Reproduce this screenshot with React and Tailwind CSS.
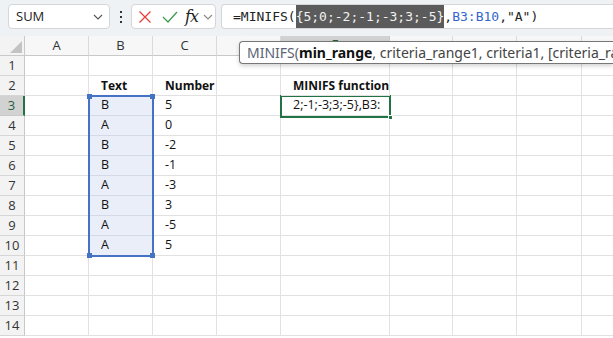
const cols = [
  { key: "A", w: "w-[64px]" },
  { key: "B", w: "w-[64px]" },
  { key: "C", w: "w-[64px]" },
  { key: "D", w: "w-[64px]" },
  { key: "E", w: "w-[109px]" },
  { key: "F", w: "w-[63px]" },
  { key: "G", w: "w-[64px]" },
  { key: "H", w: "w-[65px]" },
  { key: "I", w: "w-[64px]" },
];

const data = {
  2: { B: "Text", C: "Number", E: "MINIFS function" },
  3: { B: "B", C: "5", E: "2;-1;-3;3;-5},B3:" },
  4: { B: "A", C: "0" },
  5: { B: "B", C: "-2" },
  6: { B: "B", C: "-1" },
  7: { B: "A", C: "-3" },
  8: { B: "B", C: "3" },
  9: { B: "A", C: "-5" },
  10: { B: "A", C: "5" },
};

const rows = Array.from({ length: 14 }, (_, i) => i + 1);

function Chevron({ className }) {
  return (
    <svg viewBox="0 0 10 6" className={className} fill="none" stroke="currentColor" strokeWidth="1.1">
      <path d="M1 1l4 4 4-4" />
    </svg>
  );
}

function TopBar() {
  return (
    <div className="h-[36px] bg-[#eff2f5] flex items-start pt-[4px] pl-[8px]">
      <div className="w-[102px] h-[25px] bg-white border border-[#d4d6d9] rounded-[4px] flex items-center justify-between pl-[7px] pr-[6px]">
        <span className="text-[13px] text-[#222]">SUM</span>
        <Chevron className="w-[10px] h-[6px] text-[#555]" />
      </div>
      <div className="w-[21px] h-[25px] flex flex-col items-center justify-center gap-[3px]">
        <div className="w-[2px] h-[2px] bg-[#333]" />
        <div className="w-[2px] h-[2px] bg-[#333]" />
        <div className="w-[2px] h-[2px] bg-[#333]" />
      </div>
      <div className="w-[85px] h-[25px] bg-white border border-[#d4d6d9] rounded-[4px] flex items-center pl-[6px]">
        <svg viewBox="0 0 14 14" className="w-[14px] h-[14px]" fill="none" stroke="#e5403a" strokeWidth="1.3">
          <path d="M1.5 1.5l11 11M12.5 1.5l-11 11" />
        </svg>
        <svg viewBox="0 0 16 12" className="w-[16px] h-[12px] ml-[10px]" fill="none" stroke="#3e9b4f" strokeWidth="1.3">
          <path d="M1 6l5 5L15 1" />
        </svg>
        <span className="ml-[7px] text-[16px] italic text-[#222] font-['DejaVu_Serif',serif] leading-none tracking-[-1px]">fx</span>
        <Chevron className="w-[10px] h-[6px] text-[#888] ml-[5px]" />
      </div>
      <div className="ml-[5px] flex-1 h-[25px] bg-white border-y border-l border-[#d4d6d9] rounded-l-[4px] flex items-center pl-[11px] font-['DejaVu_Sans_Mono',monospace] text-[13px] whitespace-nowrap overflow-hidden">
        <span className="text-[#222]">=MINIFS(</span>
        <span className="bg-[#5b5b5b] text-[#f2f2f2] py-[2px]">{"{5;0;-2;-1;-3;3;-5}"}</span>
        <span className="text-[#222]">,</span>
        <span className="text-[#3366cc]">B3:B10</span>
        <span className="text-[#222]">,"A")</span>
      </div>
    </div>
  );
}

function HeaderRow() {
  return (
    <div className="flex h-[20px]">
      <div className="w-[25px] shrink-0 bg-[#f3f3f3] border-r border-b border-[#c9c9c9] relative">
        <div className="absolute right-[2px] bottom-[2px] w-0 h-0 border-l-[12px] border-l-transparent border-b-[12px] border-b-[#c3c3c3]" />
      </div>
      {cols.map((c) => (
        <div
          key={c.key}
          className={`${c.w} shrink-0 border-r flex items-center justify-center text-[13px] ${
            c.key === "E"
              ? "bg-[#d2d2d2] border-[#c9c9c9] border-b-2 border-b-[#217346] text-[#1f5f3a]"
              : "bg-[#f7f7f7] border-[#dadada] border-b border-b-[#c9c9c9] text-[#333]"
          }`}
        >
          {c.key}
        </div>
      ))}
    </div>
  );
}

function Row({ n }) {
  const active = n === 3;
  return (
    <div className="flex h-[20px]">
      <div
        className={`w-[25px] shrink-0 border-b flex items-center justify-center text-[13px] ${
          active
            ? "bg-[#d2d2d2] border-[#c9c9c9] border-r-2 border-r-[#217346] text-[#1f5f3a]"
            : "bg-[#f3f3f3] border-[#d6d6d6] border-r border-r-[#c9c9c9] text-[#333]"
        }`}
      >
        {n}
      </div>
      {cols.map((c) => {
        const v = data[n] && data[n][c.key];
        const inSel = c.key === "B" && n >= 3 && n <= 10;
        const bold = n === 2;
        const spill = n === 2 && c.key === "E";
        return (
          <div
            key={c.key}
            className={`${c.w} shrink-0 border-r border-b border-[#e1e1e1] flex items-center pl-[12px] whitespace-nowrap text-[#111] ${
              inSel ? "bg-[#e9eef8] border-b-[#d3d9e6]" : "bg-white"
            } ${bold ? "font-bold text-[12px]" : "text-[12.5px]"} ${spill ? "relative z-[1] overflow-visible" : "overflow-hidden"}`}
          >
            {v}
          </div>
        );
      })}
    </div>
  );
}

export default function App() {
  return (
    <div className="w-[613px] h-[338px] overflow-hidden bg-white relative font-['Open_Sans',sans-serif]">
      <TopBar />
      <div className="relative">
        <HeaderRow />
        {rows.map((n) => (
          <Row key={n} n={n} />
        ))}

        {/* selection B3:B10 */}
        <div className="absolute left-[88px] top-[59px] w-[66px] h-[162px] border-2 border-[#4472c4] pointer-events-none" />
        <div className="absolute left-[87px] top-[58px] w-[5px] h-[5px] bg-[#4472c4]" />
        <div className="absolute left-[150px] top-[58px] w-[5px] h-[5px] bg-[#4472c4]" />
        <div className="absolute left-[87px] top-[217px] w-[5px] h-[5px] bg-[#4472c4]" />
        <div className="absolute left-[150px] top-[217px] w-[5px] h-[5px] bg-[#4472c4]" />

        {/* active cell E3 */}
        <div className="absolute left-[280px] top-[59px] w-[111px] h-[23px] border-2 border-[#217346] pointer-events-none" />
        <div className="absolute left-[388px] top-[79px] w-[5px] h-[5px] bg-[#217346] border border-white" />
      </div>

      {/* function tooltip */}
      <div className="absolute left-[239px] top-[41px] w-[374px] h-[23px] bg-white border-y border-l border-[#777] rounded-l-[4px] shadow-[0_2px_4px_rgba(0,0,0,0.18)] flex items-center pl-[7px] whitespace-nowrap overflow-hidden text-[14px] font-['Noto_Sans',sans-serif] text-[#444]">
        <span className="text-[#5a6475]">MINIFS(</span>
        <span className="font-bold text-[#111]">min_range</span>
        <span>, criteria_range1, criteria1, [criteria_ra</span>
      </div>
    </div>
  );
}
